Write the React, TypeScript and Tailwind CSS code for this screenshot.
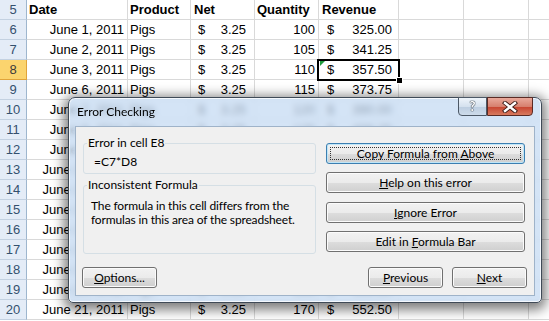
import React from 'react'

const days = [1, 2, 3, 6, 7, 8, 9, 10, 13, 14, 15, 16, 17, 20, 21]

const gridCell = 'h-[20px] border-r border-b border-[#d9d9d9] flex items-center shrink-0 overflow-hidden whitespace-nowrap'

function RowHeader({ n, active }: { n: number; active?: boolean }) {
  return (
    <div
      className={
        'h-[20px] w-[27px] shrink-0 flex items-center justify-center border-r border-b text-[13px] ' +
        (active
          ? 'bg-[#fbd46e] border-r-[#e0a43a] border-b-[#e0a43a] text-[#3b3b3b]'
          : 'bg-[#e4ecf7] border-r-[#9eb6ce] border-b-[#c3d1e1] text-[#34506e]')
      }
    >
      {n}
    </div>
  )
}

function Money({ v, w, pl, pr }: { v: string; w: string; pl: string; pr: string }) {
  return (
    <div className={`${gridCell} ${w} ${pl} ${pr} justify-between`}>
      <span>$</span>
      <span>{v}</span>
    </div>
  )
}

function Sheet() {
  return (
    <div className="font-['Liberation_Sans',Arial,sans-serif] text-[13px] text-black">
      <div className="flex">
        <RowHeader n={5} />
        <div className={`${gridCell} w-[101px] pl-[2px] font-bold`}>Date</div>
        <div className={`${gridCell} w-[63px] pl-[2px] font-bold`}>Product</div>
        <div className={`${gridCell} w-[64px] pl-[3px] font-bold`}>Net</div>
        <div className={`${gridCell} w-[64px] pl-[2px] font-bold`}>Quantity</div>
        <div className={`${gridCell} w-[80px] pl-[3px] font-bold`}>Revenue</div>
        <div className={`${gridCell} w-[65px]`} />
        <div className={`${gridCell} w-[65px]`} />
        <div className={`${gridCell} w-[65px]`} />
      </div>
      {days.map((d, i) => {
        const n = i + 6
        const qty = 100 + i * 5
        const active = n === 8
        return (
          <div key={n} className="flex">
            <RowHeader n={n} active={active} />
            <div className={`${gridCell} w-[101px] justify-end pr-[3px]`}>June {d}, 2011</div>
            <div className={`${gridCell} w-[63px] pl-[2px]`}>Pigs</div>
            <Money v="3.25" w="w-[64px]" pl="pl-[7px]" pr="pr-[8px]" />
            <div className={`${gridCell} w-[64px] justify-end pr-[3px]`}>{qty}</div>
            <div className="relative">
              <Money v={(qty * 3.25).toFixed(2)} w="w-[80px]" pl="pl-[8px]" pr="pr-[6px]" />
              {active && (
                <>
                  <div className="absolute left-[1px] top-[1px] w-0 h-0 border-t-[5px] border-r-[5px] border-t-[#1e9a3c] border-r-transparent z-10" />
                  <div className="absolute left-[-2px] top-[-1px] w-[83px] h-[22px] border-2 border-black z-10">
                    <div className="absolute right-[-5px] bottom-[-5px] w-[7px] h-[7px] bg-black border border-white" />
                  </div>
                </>
              )}
            </div>
            <div className={`${gridCell} w-[65px]`} />
            <div className={`${gridCell} w-[65px]`} />
            <div className={`${gridCell} w-[65px]`} />
          </div>
        )
      })}
    </div>
  )
}

function Btn({ children, def, className = '' }: { children: React.ReactNode; def?: boolean; className?: string }) {
  return (
    <div
      className={
        'relative h-[21px] rounded-[3px] border flex items-center justify-center text-[12px] text-black bg-[linear-gradient(to_bottom,#f2f2f2_0%,#ebebeb_50%,#dddddd_51%,#cfcfcf_100%)] ' +
        (def
          ? 'border-[#3c7fb1] shadow-[inset_0_0_0_1px_#bfe6f8]'
          : 'border-[#707070] shadow-[inset_0_0_0_1px_#fbfbfb]') +
        ' ' +
        className
      }
    >
      {def && <div className="absolute inset-[3px] border border-dotted border-[#333]" />}
      <span className="relative">{children}</span>
    </div>
  )
}

function Dialog() {
  return (
    <div className="absolute left-[68px] top-[97px] w-[474px] h-[206px] rounded-t-[7px] rounded-b-[5px] border border-[#3f4a57] bg-[rgba(196,218,242,0.72)] backdrop-blur-[3px] shadow-[0_3px_12px_4px_rgba(0,0,0,0.5),inset_0_0_0_1px_rgba(255,255,255,0.75)] font-['Lato','Noto_Sans',sans-serif] flex flex-col">
      <div className="relative h-[28px] flex items-center pl-[8px] text-[12px] text-black">
        Error Checking
        <div className="absolute left-[389px] top-[-1px] w-[29px] h-[19px] rounded-bl-[4px] border border-[#4c5866] bg-[linear-gradient(to_bottom,#eef4fa_0%,#d5e1ee_50%,#bccde0_51%,#cddbea_100%)] flex items-center justify-center">
          <span className="text-white font-bold text-[13px] leading-none [text-shadow:0_0_1px_#25303c,0_0_1px_#25303c,0_0_1px_#25303c]">?</span>
        </div>
        <div className="absolute left-[418px] top-[-1px] w-[46px] h-[19px] rounded-br-[4px] border border-[#5a2a24] bg-[linear-gradient(to_bottom,#e9a99b_0%,#d7806e_50%,#c7432f_51%,#d77a5e_100%)] flex items-center justify-center">
          <svg width="16" height="12" viewBox="0 0 16 12">
            <path d="M3 2 L13 10 M13 2 L3 10" stroke="#3b1a16" strokeWidth="4.2" strokeLinecap="square" />
            <path d="M3 2 L13 10 M13 2 L3 10" stroke="#ffffff" strokeWidth="2.4" strokeLinecap="square" />
          </svg>
        </div>
      </div>
      <div className="mx-[6px] h-[170px] border border-[#9fb3c9] bg-[#f0f0f0] flex flex-col text-[12px] leading-[14px] text-black">
        <div className="flex h-[127px]">
          <div className="w-[233px] ml-[7px] pt-[9px] flex flex-col">
            <fieldset className="h-[38px] border border-[#d5dfe5] rounded-[3px]">
              <legend className="ml-[3px] px-[1px]">Error in cell E8</legend>
              <div className="pl-[10px] pt-[5px]">=C7*D8</div>
            </fieldset>
            <fieldset className="mt-[4px] h-[76px] border border-[#d5dfe5] rounded-[3px]">
              <legend className="ml-[3px] px-[1px]">Inconsistent Formula</legend>
              <div className="pl-[7px] pt-[7px] tracking-[-0.15px]">
                The formula in this cell differs from the
                <br />
                formulas in this area of the spreadsheet.
              </div>
            </fieldset>
          </div>
          <div className="w-[199px] ml-[10px] pt-[16px] flex flex-col gap-[8px]">
            <Btn def>
              Copy Formula from <u>A</u>bove
            </Btn>
            <Btn>
              <u>H</u>elp on this error
            </Btn>
            <Btn className="mt-[1px]">
              <u>I</u>gnore Error
            </Btn>
            <Btn>
              Edit in <u>F</u>ormula Bar
            </Btn>
          </div>
        </div>
        <div className="mt-[13px] flex pl-[6px]">
          <Btn className="w-[75px]">
            <u>O</u>ptions...
          </Btn>
          <Btn className="w-[75px] ml-[211px]">
            <u>P</u>revious
          </Btn>
          <Btn className="w-[75px] ml-[9px]">
            <u>N</u>ext
          </Btn>
        </div>
      </div>
    </div>
  )
}

export default function App() {
  return (
    <div className="relative w-[549px] h-[321px] overflow-hidden bg-white">
      <Sheet />
      <Dialog />
    </div>
  )
}
